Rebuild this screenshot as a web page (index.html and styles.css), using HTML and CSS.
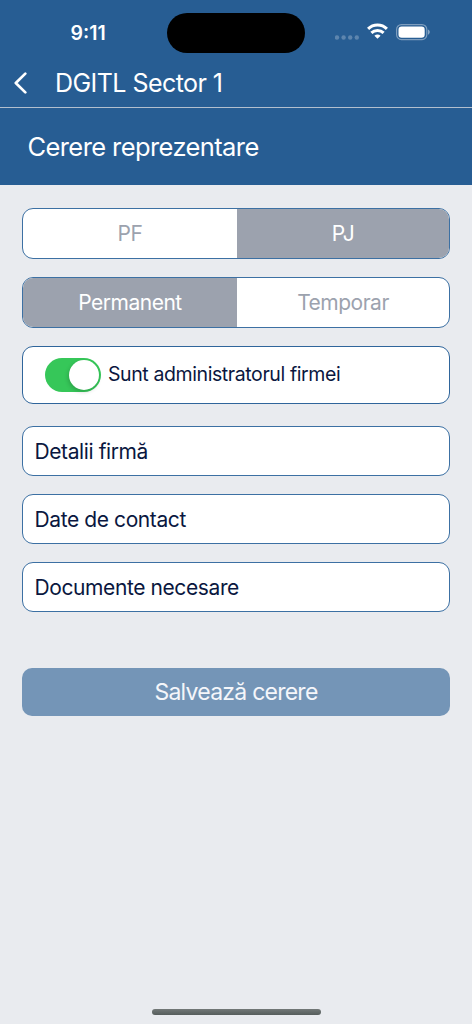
FILE: index.html
```html
<!DOCTYPE html>
<html lang="ro">
<head>
<meta charset="utf-8">
<title>DGITL Sector 1</title>
<link rel="stylesheet" href="styles.css">
</head>
<body>
<div class="screen">
  <header class="header">
    <div class="status">
      <span class="time">9:11</span>
      <span class="island"></span>
      <span class="indicators">
        <svg class="dots" width="24" height="5" viewBox="0 0 24 5"><g fill="#fff" fill-opacity=".25"><circle cx="2" cy="2.5" r="2.2"/><circle cx="8.6" cy="2.5" r="2.2"/><circle cx="15.2" cy="2.5" r="2.2"/><circle cx="21.8" cy="2.5" r="2.2"/></g></svg>
        <svg class="wifi" width="21" height="16" viewBox="0 0 21 16"><g fill="none" stroke="#fff" stroke-width="3"><path d="M1.1 5.9c5.2-5.2 13.6-5.2 18.8 0"/><path d="M4.4 9.8c3.3-3.2 8.9-3.2 12.2 0"/></g><path d="M7.4 12.7c1.8-1.5 4.4-1.5 6.2 0L10.5 15.8Z" fill="#fff"/></svg>
        <svg class="battery" width="35" height="17" viewBox="0 0 35 17"><rect x=".6" y=".6" width="30.2" height="15" rx="4.8" fill="none" stroke="#fff" stroke-opacity=".4" stroke-width="1.2"/><rect x="2.5" y="2.5" width="26.2" height="11.2" rx="3.2" fill="#fff"/><path d="M32 5.4v5.4c1.1-.5 1.8-1.5 1.8-2.7s-.7-2.2-1.8-2.7Z" fill="#fff" fill-opacity=".45"/></svg>
      </span>
    </div>
    <nav class="nav">
      <svg class="back" width="13" height="22" viewBox="0 0 13 22"><path d="M11.3 1.6 1.8 11l9.5 9.4" fill="none" stroke="#fff" stroke-width="2.7" stroke-linecap="round" stroke-linejoin="round"/></svg>
      <span class="nav-title">DGITL Sector 1</span>
    </nav>
    <h1 class="page-title">Cerere reprezentare</h1>
  </header>
  <main class="form">
    <div class="segmented"><span class="segment">PF</span><span class="segment selected">PJ</span></div>
    <div class="segmented"><span class="segment selected">Permanent</span><span class="segment">Temporar</span></div>
    <div class="switch-row"><span class="switch"><span class="knob"></span></span><span class="switch-label">Sunt administratorul firmei</span></div>
    <div class="sections">
      <div class="section">Detalii firmă</div>
      <div class="section">Date de contact</div>
      <div class="section">Documente necesare</div>
    </div>
    <div class="save">Salvează cerere</div>
  </main>
  <div class="home-indicator"></div>
</div>
</body>
</html>
```
FILE: styles.css
```css
* { box-sizing: border-box; }
body { margin: 0; font-family: Inter, "Liberation Sans", sans-serif; }
.screen { width: 472px; height: 1024px; display: flex; flex-direction: column; background: #e9ebef; overflow: hidden; }
.header { background: #275d93; color: #fff; }
.status { height: 63px; display: grid; grid-template-columns: 167px 138px 1fr; align-items: start; }
.time { margin: 21px 0 0 70.5px; font-size: 19.5px; line-height: 24px; font-weight: 600; letter-spacing: 0; }
.island { height: 40.5px; margin-top: 12.5px; border-radius: 21px; background: #000; }
.indicators { display: flex; padding: 23px 0 0 30px; }
.dots { margin-top: 12px; }
.wifi { margin-left: 8px; }
.battery { margin: .5px 0 0 8px; }
.nav { height: 45px; display: flex; align-items: center; padding: 0 0 4px 14px; border-bottom: 1px solid #b3bfce; }
.nav-title { margin: -1px 0 0 28px; font-size: 25px; font-weight: 400; letter-spacing: -.55px; }
.page-title { margin: 0; height: 77px; padding-left: 27.5px; font-size: 25.5px; font-weight: 400; line-height: 78px; letter-spacing: -.6px; }
.form { flex: 1; padding: 23px 22px 0; }
.segmented { height: 51px; margin-bottom: 18px; display: grid; grid-template-columns: 214px 1fr; border: 1px solid #3c70a3; border-radius: 11px; overflow: hidden; background: #fff; }
.segment { display: flex; align-items: center; justify-content: center; padding-bottom: 1px; font-size: 21px; font-weight: 400; color: #9ca2ae; letter-spacing: -.5px; }
.segment.selected { background: #9ca2ae; color: #fff; }
.switch-row { height: 58px; display: flex; align-items: center; padding-left: 22px; border: 1px solid #2f659b; border-radius: 11px; background: #fff; color: #0a1740; }
.switch { width: 56px; height: 34px; padding: 2px; border-radius: 17px; background: #36c759; display: flex; justify-content: flex-end; }
.knob { width: 30px; height: 30px; border-radius: 50%; background: #fff; box-shadow: -1px 2px 4px rgba(0, 0, 0, .18); }
.switch-label { margin: -2px 0 0 7px; font-size: 19.5px; letter-spacing: -.4px; }
.sections { margin-top: 22px; display: grid; gap: 18px; }
.section { height: 50px; display: flex; align-items: center; padding-left: 11.5px; border: 1px solid #3c70a3; border-radius: 11px; background: #fff; color: #0a1740; font-size: 21px; letter-spacing: -.4px; }
.save { height: 48px; margin-top: 56px; border-radius: 10px; background: #7495b7; color: #f4f6fa; display: flex; align-items: center; justify-content: center; font-size: 23px; font-weight: 400; letter-spacing: -.75px; }
.home-indicator { width: 169px; height: 6px; margin: 0 auto 9px; border-radius: 3px; background: linear-gradient(#727877, #565d5c); }
```
